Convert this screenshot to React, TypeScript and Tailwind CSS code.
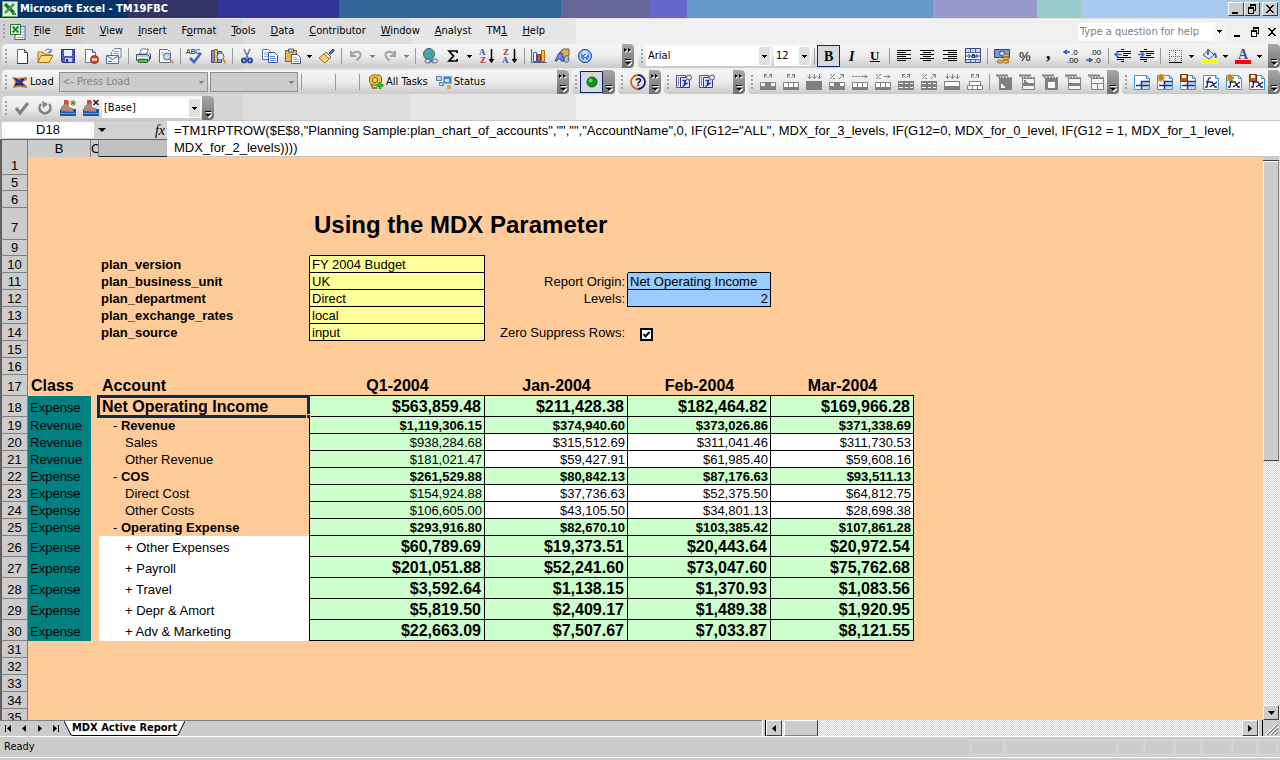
import { ReactNode, useState } from "react";

const ARROW = "M0 0h5v1h-1v1h-1v1h-1v-1h-1v-1h-1z";

// Small 16x16 toolbar drawings, keyed by command name.
const icons: Record<string, ReactNode> = {
  excel: (
    <>
      <rect x="5" y="2.500" width="10" height="13" fill="#fff" stroke="#4a5a9a" />
      <path d="M11 5h3M11 8h3M11 11h3M7 13.500h7" stroke="#7a9ad0" />
      <rect x="0.5" y="0.5" width="10" height="10" fill="#e4f4e0" stroke="#2c7a34" />
      <path d="M2.500 2.500l6 6M8.500 2.500l-6 6" stroke="#1e8a2c" strokeWidth="2" />
    </>
  ),
  app: (
    <>
      <rect x="0.5" y="0.5" width="15" height="15" fill="#e4f4e0" stroke="#6fae70" />
      <path d="M3 3l9 9" stroke="#187a28" strokeWidth="3.500" />
      <path d="M12 3l-9 9" stroke="#3ca048" strokeWidth="2.500" />
      <path d="M10 12h4v2h-4z" fill="#2e9a3c" />
    </>
  ),
  new: (
    <>
      <path d="M3.500 1.500h7l3 3v11h-10z" fill="#fff" stroke="#5a6a9a" />
      <path d="M10.500 1.500v3h3" fill="#c8d4f0" stroke="#3a4a7a" />
      <path d="M13.500 5v10.500h-10" fill="none" stroke="#202c5c" />
    </>
  ),
  open: (
    <>
      <path d="M1 14V4h5l1 2h6v3" fill="#f4d070" stroke="#a87818" />
      <path d="M1 14.500l3-7h12l-4 7z" fill="#ffdc78" stroke="#a06c10" />
      <path d="M8 3c2-3 5-2 6 0M14 1v3h-3" fill="none" stroke="#405a98" />
    </>
  ),
  save: (
    <>
      <path d="M1.500 1.500h13v13h-12l-1-1z" fill="#4a5cc8" stroke="#28307c" />
      <rect x="4" y="2" width="8" height="6" fill="#e8ecff" />
      <rect x="5" y="10" width="7" height="4" fill="#c8cce0" />
      <rect x="6" y="11" width="2" height="3" fill="#28307c" />
    </>
  ),
  permission: (
    <>
      <path d="M2.500 1.500h7l3 3v10h-10z" fill="#fff" stroke="#6878a8" />
      <path d="M9.500 1.500v3h3" fill="#c8d4f0" stroke="#4a5a8a" />
      <circle cx="11.500" cy="11.500" r="4" fill="#e04428" stroke="#a02810" />
      <path d="M9 11.500h5" stroke="#fff" strokeWidth="2" />
    </>
  ),
  mail: (
    <>
      <path d="M5.500 7V4.500l3-4h6.500v9h-3" fill="#fff" stroke="#7080b0" />
      <path d="M8 3.500h5M7 5.500h6" stroke="#90a4d0" />
      <path d="M0.500 7.500h12v8h-12z" fill="#f0f4ff" stroke="#5868a0" />
      <path d="M0.500 7.500l6 4 6-4M2 13.500h4" fill="none" stroke="#5868a0" />
    </>
  ),
  print: (
    <>
      <path d="M4.500 6l2-5h7l-2 5z" fill="#fff" stroke="#6070a0" />
      <path d="M1.500 6.500h11l2 2v4h-13z" fill="#c4cbd8" stroke="#404c68" />
      <path d="M2 9.500h11" stroke="#fff" />
      <path d="M3.500 11.500h9v3h-9z" fill="#58c048" stroke="#287020" />
      <path d="M14.500 5l1 2v4" fill="none" stroke="#404c68" />
    </>
  ),
  preview: (
    <>
      <path d="M1.500 1.500h8l3 3v10h-11z" fill="#fff" stroke="#5a6a9a" />
      <path d="M3 4.500h4M3 6.500h3" stroke="#b0bcd8" />
      <circle cx="9" cy="8.500" r="3.500" fill="#c0e0f8" stroke="#506080" />
      <path d="M11.500 11l4 4" stroke="#d09030" strokeWidth="2" />
    </>
  ),
  spell: (
    <>
      <text x="-1" y="6" fontSize="7" fontFamily="Liberation Sans, sans-serif" fill="#000">ABC</text>
      <path d="M3 10l4 4 7-9" fill="none" stroke="#3a66c8" strokeWidth="2.500" />
    </>
  ),
  research: (
    <>
      <path d="M1.500 2.500h3v12h-3z" fill="#7890d0" stroke="#3a4a8a" />
      <path d="M4.500 1.500h3v13h-3z" fill="#e0c878" stroke="#80642a" />
      <path d="M7.500 3.500h4v11h-4z" fill="#90a8e0" stroke="#3a4a8a" />
      <circle cx="10.500" cy="8.500" r="3.500" fill="#d4ecfc" stroke="#506080" />
      <path d="M13 11l2.500 4" stroke="#d09030" strokeWidth="2" />
    </>
  ),
  cut: (
    <>
      <path d="M5 1l4 9M11 1l-4 9" stroke="#6878a0" strokeWidth="1.500" />
      <circle cx="5" cy="12.500" r="2" fill="none" stroke="#2848a8" strokeWidth="2" />
      <circle cx="11" cy="12.500" r="2" fill="none" stroke="#2848a8" strokeWidth="2" />
    </>
  ),
  copy: (
    <>
      <path d="M0.500 1.500h6l2 2v8h-8z" fill="#fff" stroke="#5070b0" />
      <path d="M2 4.500h4M2 6.500h4M2 8.500h4" stroke="#90b0e0" />
      <path d="M6.500 4.500h6l3 3v7h-9z" fill="#fff" stroke="#3050a0" />
      <path d="M8 8.500h5M8 10.500h6M8 12.500h6" stroke="#5888d8" />
    </>
  ),
  paste: (
    <>
      <path d="M0.500 2.500h11v11h-11z" fill="#e8b850" stroke="#886018" />
      <path d="M3.500 1h5v3h-5z" fill="#c8ccd8" stroke="#585c70" />
      <path d="M6.500 6.500h6l3 3v6h-9z" fill="#fff" stroke="#4858a0" />
      <path d="M8 9.500h4M8 11.500h6M8 13.500h6" stroke="#90a8d8" />
    </>
  ),
  painter: (
    <>
      <path d="M10 5l4-4 1.500 1.500-4 4z" fill="#6878c8" stroke="#303c80" />
      <path d="M7 4l5 5-2 2-5-5z" fill="#d8dce8" stroke="#606880" />
      <path d="M5 6l5 5-4 4-6-5z" fill="#f8d868" stroke="#a07820" />
    </>
  ),
  undo: <path d="M3 3v5h5M3.500 7.500c2-5 10-5 9 0-.5 2-2 3-4 5" fill="none" stroke="#a0a0a0" strokeWidth="2" />,
  redo: <path d="M13 3v5h-5M12.500 7.500c-2-5-10-5-9 0 .5 2 2 3 4 5" fill="none" stroke="#a0a0a0" strokeWidth="2" />,
  link: (
    <>
      <circle cx="7" cy="6" r="5.500" fill="#4898d8" stroke="#286098" />
      <path d="M3 3c3-2 4 1 3 3s-3 1-3 3M9 2c3 2 2 3 1 5" fill="none" stroke="#58b050" strokeWidth="2" />
      <ellipse cx="6" cy="13" rx="3" ry="2" fill="#e8ecf4" stroke="#505c78" />
      <ellipse cx="12.500" cy="13" rx="3" ry="2" fill="#e8ecf4" stroke="#505c78" />
      <path d="M7 13h5" stroke="#505c78" />
    </>
  ),
  sum: <path d="M12 5V3h-8l4.500 5-4.500 5h8V11" fill="none" stroke="#000" strokeWidth="1.700" />,
  sortAsc: (
    <>
      <text x="0" y="7" fontSize="9" fontWeight="bold" fontFamily="Liberation Serif, serif" fill="#3050b0">A</text>
      <text x="1" y="15" fontSize="9" fontWeight="bold" fontFamily="Liberation Serif, serif" fill="#b03030">Z</text>
      <path d="M12.500 1v13M10.500 11l2 3 2-3" fill="none" stroke="#000" strokeWidth="1.500" />
    </>
  ),
  sortDesc: (
    <>
      <text x="1" y="7" fontSize="9" fontWeight="bold" fontFamily="Liberation Serif, serif" fill="#b03030">Z</text>
      <text x="0" y="15" fontSize="9" fontWeight="bold" fontFamily="Liberation Serif, serif" fill="#3050b0">A</text>
      <path d="M12.500 1v13M10.500 11l2 3 2-3" fill="none" stroke="#000" strokeWidth="1.500" />
    </>
  ),
  chart: (
    <>
      <path d="M0.500 1v13.500h15" fill="none" stroke="#4060a0" />
      <path d="M2.500 4.500h3v9h-3z" fill="#f0f4ff" stroke="#3858b0" />
      <path d="M6.500 6.500h3v7h-3z" fill="#e05830" stroke="#903010" />
      <path d="M10.500 2.500h3v11h-3z" fill="#f0c840" stroke="#c06010" />
    </>
  ),
  drawing: (
    <>
      <path d="M6 4l3-3h6v6l-3 3h-6z" fill="#d8b458" stroke="#806020" />
      <path d="M1 13l4-8h3l2 8h-3v-2h-3l-1 2z" fill="#7a88e0" stroke="#34408c" />
      <ellipse cx="12.500" cy="11" rx="2.500" ry="3.500" fill="#b8bcc8" stroke="#606478" />
    </>
  ),
  help: (
    <>
      <circle cx="8" cy="8" r="6.500" fill="#4a8ae8" stroke="#1c4ca8" />
      <circle cx="8" cy="8" r="5" fill="none" stroke="#fff" />
      <path d="M6 6.500c0-3 4.500-2.500 4 0-.5 1-2 1.200-2 2.500M8 10.500v1.500" fill="none" stroke="#fff" strokeWidth="1.500" />
    </>
  ),
  bold: <text x="3" y="13" fontSize="14" fontWeight="bold" fontFamily="Liberation Serif, serif">B</text>,
  italic: <text x="5" y="13" fontSize="14" fontWeight="bold" fontStyle="italic" fontFamily="Liberation Serif, serif">I</text>,
  underline: (
    <>
      <text x="3" y="12" fontSize="13" fontWeight="bold" fontFamily="Liberation Serif, serif">U</text>
      <path d="M3 13.500h10" stroke="#000" />
    </>
  ),
  left: <path d="M1 2.500h14M1 4.500h9M1 6.500h14M1 8.500h9M1 10.500h14M1 12.500h9" stroke="#000" />,
  center: <path d="M1 2.500h14M4 4.500h8M1 6.500h14M4 8.500h8M1 10.500h14M4 12.500h8" stroke="#000" />,
  right: <path d="M1 2.500h14M6 4.500h9M1 6.500h14M6 8.500h9M1 10.500h14M6 12.500h9" stroke="#000" />,
  merge: (
    <>
      <path d="M0.500 0.500h15v14h-15z" fill="#fff" stroke="#384880" />
      <path d="M1 1h14v3h-14zM1 11h14v3h-14z" fill="#c8d8f4" />
      <path d="M0.500 4.500h15M0.500 11.500h15M5.500 0.500v4M10.500 0.500v4M5.500 11.500v3M10.500 11.500v3" stroke="#4860a8" />
      <path d="M1 8h4M11 8h4M3.500 6l2 2-2 2M12.500 6l-2 2 2 2" fill="none" stroke="#203070" />
      <text x="6" y="10" fontSize="8" fontWeight="bold" fontFamily="Liberation Sans, sans-serif">a</text>
    </>
  ),
  currency: (
    <>
      <path d="M0.500 1.500h15v8h-15z" fill="#7898e0" stroke="#2c4490" />
      <circle cx="8" cy="5.500" r="2.500" fill="#c8d8f8" stroke="#2c4490" />
      <ellipse cx="6" cy="13.500" rx="3" ry="1.500" fill="#f0c850" stroke="#906818" />
      <ellipse cx="12" cy="7.500" rx="3" ry="1.500" fill="#f0c850" stroke="#906818" />
      <ellipse cx="12" cy="10.500" rx="3" ry="1.500" fill="#f0c850" stroke="#906818" />
      <ellipse cx="12" cy="13.500" rx="3" ry="1.500" fill="#f0c850" stroke="#906818" />
    </>
  ),
  percent: <text x="2" y="13" fontSize="13" fontFamily="Liberation Sans, sans-serif">%</text>,
  comma: <text x="6" y="11" fontSize="18" fontWeight="bold" fontFamily="Liberation Serif, serif">,</text>,
  moreDecimals: (
    <>
      <path d="M1 4h6M4 2l-3 2 3 2" fill="none" stroke="#2858c0" strokeWidth="1.500" />
      <text x="8" y="7" fontSize="8" fontFamily="Liberation Sans, sans-serif">.0</text>
      <text x="4" y="15" fontSize="8" fontFamily="Liberation Sans, sans-serif">.00</text>
    </>
  ),
  lessDecimals: (
    <>
      <text x="4" y="7" fontSize="8" fontFamily="Liberation Sans, sans-serif">.00</text>
      <path d="M0 12h6M3 10l3 2-3 2" fill="none" stroke="#2858c0" strokeWidth="1.500" />
      <text x="8" y="15" fontSize="8" fontFamily="Liberation Sans, sans-serif">.0</text>
    </>
  ),
  outdent: (
    <>
      <path d="M6 1.500h3M2 3.500h14M8 5.500h8M8 7.500h5M2 9.500h14M2 11.500h7M6 13.500h3" stroke="#000" />
      <path d="M0 6.500h7M3 4l-3 2.500 3 2.500" fill="none" stroke="#3868c8" strokeWidth="1.500" />
    </>
  ),
  indent: (
    <>
      <path d="M6 1.500h3M2 3.500h14M8 5.500h8M8 7.500h5M2 9.500h14M2 11.500h7M6 13.500h3" stroke="#000" />
      <path d="M0 6.500h6M3 4l3 2.500-3 2.500" fill="none" stroke="#3868c8" strokeWidth="1.500" />
    </>
  ),
  borders: (
    <>
      <path d="M2 2.500h13M2 8.500h13M2.500 2v12M8.500 2v12M14.500 2v12" stroke="#606060" strokeDasharray="1 1" />
      <path d="M2 14.500h13" stroke="#000" />
    </>
  ),
  fill: (
    <>
      <path d="M2 7l6-5 5 5-5 4z" fill="#e8f0fc" stroke="#405890" />
      <path d="M7 1v6M13 5c2 1 2 3 2 5" fill="none" stroke="#3060b8" strokeWidth="1.800" />
      <path d="M0 12h16v4h-16z" fill="#ff0" />
    </>
  ),
  fontColor: (
    <>
      <text x="3" y="11" fontSize="14" fontWeight="bold" fontFamily="Liberation Serif, serif" fill="#3c5088">A</text>
      <path d="M0 12h16v4h-16z" fill="#f00" />
    </>
  ),
  load: (
    <>
      <path d="M0 3l6 1 9-1v3l-5 2 5 4v2l-8-1-6 1 2-6z" fill="#c87838" />
      <path d="M2 4l5 2 6-2-3 5 3 3-6-1-5 1 3-4z" fill="#10207c" />
      <path d="M5 6h5v4h-5z" fill="#28409c" />
    </>
  ),
  tasks: (
    <>
      <path d="M1.500 3l3-2h7l2 2v5l-3 3h-6l-3-3z" fill="#f0c030" stroke="#886410" />
      <circle cx="7" cy="6" r="2.500" fill="#fae890" stroke="#705010" />
      <path d="M3 10l2 4h4" fill="none" stroke="#a87c18" strokeWidth="2" />
      <path d="M12 8v7M8.500 11.500h7" stroke="#38a838" strokeWidth="3" />
    </>
  ),
  status: (
    <>
      <path d="M0.500 2.500h5v4h-5zM3.500 8.500h4v3h-4z" fill="#b8d4f8" stroke="#5880c0" />
      <path d="M7.500 2.500h8v7h-8z" fill="#4880d0" stroke="#8ab0e8" />
      <path d="M9 5h4v3h-4z" fill="#d8e8ff" />
      <path d="M11 11h4v4h-4z" fill="#e8a070" />
    </>
  ),
  green: (
    <>
      <circle cx="8" cy="8" r="5" fill="#189028" stroke="#0c6018" />
      <circle cx="6.500" cy="6.500" r="2" fill="#50e058" />
    </>
  ),
  question: (
    <>
      <path d="M8 1a7 7 0 0 0 0 14" fill="none" stroke="#d06818" strokeWidth="1.800" />
      <path d="M8 1a7 7 0 0 1 0 14" fill="none" stroke="#181880" strokeWidth="1.800" />
      <text x="5" y="12" fontSize="11" fontWeight="bold" fontFamily="Liberation Sans, sans-serif">?</text>
    </>
  ),
  snapshot: (
    <>
      <path d="M0.500 1.500h9v12h-9z" fill="#f0f0fc" stroke="#50508c" />
      <path d="M2.500 3v9" stroke="#8080b8" />
      <path d="M4.500 3.500h9v10h-9z" fill="#e0e4fc" stroke="#383880" />
      <path d="M6.500 6.500h3l-1 3h2l-4 3" fill="none" stroke="#2030a0" strokeWidth="1.500" />
      <circle cx="13" cy="3.500" r="2.500" fill="#e8e8f0" stroke="#50508c" />
    </>
  ),
  check: <path d="M2 8l4 5 8-10" fill="none" stroke="#808080" strokeWidth="3" />,
  refresh: (
    <>
      <path d="M4 4a5.500 5.500 0 1 0 8 0" fill="none" stroke="#808080" strokeWidth="2.500" />
      <path d="M5 1l6 3-5 4z" fill="#808080" />
    </>
  ),
  cubeNew: (
    <>
      <path d="M0 9h16v7h-16z" fill="#1c58a8" />
      <path d="M1 11V7l3-3 1-3h4v6l4 1v4z" fill="#b08878" />
      <path d="M4 0h4v4h-4z" fill="#d04848" />
      <path d="M13 0v6M10 3h6M11 1l4 4M15 1l-4 4" stroke="#807010" />
      <path d="M0 13h16v1h-16z" fill="#58a0e0" />
    </>
  ),
  cubeDrop: (
    <>
      <path d="M0 9h16v7h-16z" fill="#1c58a8" />
      <path d="M1 11V7l3-3 1-3h4v6l4 1v4z" fill="#b08878" />
      <path d="M4 0h4v4h-4z" fill="#d04848" />
      <path d="M10.500 0l5 5M15.500 0l-5 5" stroke="#202030" strokeWidth="1.500" />
      <path d="M0 13h16v1h-16z" fill="#58a0e0" />
    </>
  ),
  formula: (
    <>
      <path d="M0.500 1.500h12l3 3v11h-15z" fill="#fff" stroke="#3898d0" />
      <path d="M12.500 1.500v3h3" fill="none" stroke="#3898d0" />
      <path d="M8 4c-3-1-3 2-4 9h-2M3 8h4M7 8h2l3 5h2M14 8l-7 5" fill="none" stroke="#182070" strokeWidth="1.300" />
    </>
  ),
  sheet: (
    <>
      <path d="M0.500 1.500h12l3 3v11h-15z" fill="#fff" stroke="#3898d0" />
      <path d="M12.500 1.500v3h3" fill="none" stroke="#3898d0" />
      <path d="M7 8h8v7h-8z" fill="#c0dcf4" />
      <path d="M7 7.500h9M2 11.500h13M7.500 7v8" stroke="#183880" strokeWidth="1.500" />
    </>
  ),
};

const star = <path d="M4 0v8M0 4h8M1 1l6 6M7 1l-6 6" stroke="#c88810" strokeWidth="1.500" />;
const disk = (
  <>
    <path d="M0.500 0.500h7v7h-7z" fill="#c05818" stroke="#803008" />
    <path d="M2 1h4v3h-4z" fill="#fff" />
  </>
);
icons.sheetNew = <>{icons.sheet}{star}</>;
icons.sheetSave = <>{icons.sheet}{disk}</>;
icons.formulaNew = <>{icons.formula}{star}</>;
icons.formulaSave = <>{icons.formula}{disk}</>;

// Greyed-out allocation commands: an arrow hint over a strip of cells.
const hints: Record<string, string> = {
  split: "M4.500 4V0.500M4 0.500h3M4.500 0.500l3 3M11.500 4V0.500M12 0.500h-3M11.500 0.500l-3 3",
  down: "M3.500 0v5M1.500 2.500l2 2 2-2M8.500 0v5M6.500 2.500l2 2 2-2M13.500 0v5M11.500 2.500l2 2 2-2",
  pct: "M1 5l5-5M1 1h2M4 4.500h2M10 5l4-4M11 0.500h3.500v3",
  dots: "M0 2.500h2M3 2.500h2M6 2.500h2M9 2.500h6M13 0.500l2 2-2 2",
  pctRight: "M1 5l5-5M1 1h2M4 4.500h2M9 2.500h6M13 0.500l2 2-2 2",
};
const bodies: Record<string, ReactNode> = {
  left: <><path d="M0.500 8.500h15v7h-15z" fill="#fff" /><path d="M0 12h16v4h-16zM5 8h6v6h-6z" fill="#808080" stroke="none" /><path d="M10.500 8v4" /></>,
  cells: <><path d="M0.500 8.500h15v7h-15zM5.500 8v6M10.500 8v6" fill="#fff" /><path d="M0 13h16v3h-16z" fill="#808080" stroke="none" /></>,
  solid: <path d="M0 7h16v9h-16z" fill="#808080" stroke="none" />,
  grid: <><path d="M0 7h16v9h-16z" fill="#808080" stroke="none" /><path d="M1 9.500h4M7 9.500h3M12 9.500h3M1 13.500h4M7 13.500h3M12 13.500h3" stroke="#fff" /></>,
  half: <><path d="M0.500 7.500h15v8h-15z" fill="#fff" /><path d="M0 12h16v4h-16z" fill="#808080" stroke="none" /></>,
  wide: <path d="M0.500 11.500h15v4h-15zM2.500 11.500v-4h11v4M5.500 11.500v4M10.500 11.500v4" fill="#fff" />,
};
const allocations = [
  ["split", "left"], ["split", "cells"], ["down", "solid"], ["pct", "left"], ["dots", "cells"],
  ["pctRight", "cells"], ["split", "grid"], ["pct", "grid"], ["down", "half"], ["split", "wide"],
];
allocations.forEach(([hint, body], i) => {
  icons[`allocate${i}`] = (
    <g stroke="#808080" fill="none">
      <path d={hints[hint]} />
      {bodies[body]}
    </g>
  );
});

const pivots: ReactNode[] = [
  <><path d="M3 4h13v12h-13z" fill="#808080" stroke="none" /><path d="M5 10h2v2h2v2h-4z" fill="#fff" stroke="none" /></>,
  <><path d="M3.500 4.500h12v11h-12z" fill="#f4f4f4" /><path d="M3 9h13v3h-13z" fill="#808080" stroke="none" /><path d="M5 6h2v2h2v1h-4z" fill="#808080" stroke="none" /></>,
  <><path d="M3 4h13v12h-13z" fill="#808080" stroke="none" /><path d="M6 8h7v6h-7z" fill="#fff" stroke="none" /></>,
  <><path d="M3.500 4.500h12v11h-12z" fill="#f4f4f4" /><path d="M3 9h13v3h-13z" fill="#808080" stroke="none" /></>,
  <path d="M3.500 4.500h12v11h-12zM3.500 9.500h12M9.500 9.500v6" fill="#f4f4f4" />,
];
pivots.forEach((body, i) => {
  icons[`pivot${i}`] = (
    <g stroke="#808080" fill="none">
      <path d="M0 1.500h12" strokeWidth="2" />
      <path d="M2 3.500h14" strokeDasharray="2 1" />
      {body}
    </g>
  );
});

function Icon({ name }: { name: string }) {
  return (
    <svg viewBox="0 0 16 16" className="w-4 h-4 shrink-0 overflow-visible" aria-hidden="true">
      {icons[name]}
    </svg>
  );
}

function Tool({ name, active = false }: { name: string; active?: boolean }) {
  return (
    <button
      aria-label={name}
      className={`w-[23px] h-[22px] shrink-0 flex items-center justify-center ${
        active ? "border border-[#0a246a] bg-[#d6d9de]" : ""
      }`}
    >
      <Icon name={name} />
    </button>
  );
}

function Tools({ names }: { names: string[] }) {
  return names.map((n) => <Tool key={n} name={n} />);
}

function Down({ color = "#000", label = "More" }: { color?: string; label?: string }) {
  return (
    <button aria-label={label} className="w-[11px] h-5 shrink-0 flex items-center justify-center">
      <svg viewBox="0 0 5 3" className="w-[5px] h-[3px]">
        <path d={ARROW} fill={color} />
      </svg>
    </button>
  );
}

function Sep() {
  return (
    <div className="w-[6px] shrink-0 flex justify-center">
      <div className="w-px h-4 bg-[#9a9a9a]" />
    </div>
  );
}

function Grip() {
  return (
    <div className="w-[8px] shrink-0 flex justify-center">
      <div className="w-[2px] h-[15px] bg-[repeating-linear-gradient(#a0a0a0_0_2px,transparent_2px_4px)]" />
    </div>
  );
}

function Cap({ more = false }: { more?: boolean }) {
  return (
    <button
      aria-label="Toolbar options"
      className="w-3 h-full ml-auto shrink-0 rounded-r-sm bg-linear-to-b from-[#a8a8a8] to-[#707070] flex items-end justify-center pb-px"
    >
      <svg viewBox="0 0 8 20" className="w-2 h-5">
        {more && (
          <>
            <path d="M1 2l3 2-3 2zM5 2l3 2-3 2z" fill="#fff" />
            <path d="M0 1l3 2-3 2zM4 1l3 2-3 2z" fill="#000" />
          </>
        )}
        <path d="M2 13.500h6M2 16h6l-3 3z" fill="#fff" stroke="#fff" />
        <path d="M1 12.500h6" stroke="#000" />
        <path d="M1 15h6l-3 3z" fill="#000" />
      </svg>
    </button>
  );
}

function Bar({ width = "", children }: { width?: string; children: ReactNode }) {
  return (
    <div
      className={`h-6 flex items-center shrink-0 rounded-sm overflow-hidden bg-linear-to-b from-[#f6f6f6] via-[#ececec] to-[#cacaca] ${width}`}
    >
      {children}
    </div>
  );
}

function Combo({ label, value, width, disabled = false }: { label: string; value: string; width: string; disabled?: boolean }) {
  return (
    <div className={`relative h-5 shrink-0 ${width}`}>
      <select
        aria-label={label}
        disabled={disabled}
        defaultValue={value}
        className={`w-full h-full appearance-none pl-[2px] ${
          disabled ? "border border-[#909090] bg-[#cccccc] text-[#84847c]" : "bg-white"
        }`}
      >
        <option>{value}</option>
      </select>
      <span
        className={`absolute right-px top-px bottom-px w-[11px] pointer-events-none flex items-center justify-center ${
          disabled ? "" : "bg-[#e0e0e0]"
        }`}
      >
        <svg viewBox="0 0 5 3" className="w-[5px] h-[3px]">
          <path d={ARROW} fill={disabled ? "#808080" : "#000"} />
        </svg>
      </span>
    </div>
  );
}

const windowGlyphs = [
  "M2 9h6v2h-6z",
  "M4 1h6v2h-6zM9 3h1v4h-1zM4 3h1v1h-1zM2 4h6v2h-6zM2 6h1v4h-1zM7 6h1v4h-1zM2 10h6v1h-6zM8 7h2v1h-2z",
  "M2 2h2v1h1v1h2v-1h1v-1h2v1h-1v1h-1v1h-1v2h1v1h1v1h1v1h-2v-1h-1v-1h-2v1h-1v1h-2v-1h1v-1h1v-1h1v-2h-1v-1h-1v-1h-1z",
];
const windowLabels = ["Minimize", "Restore", "Close"];

function Glyph({ d }: { d: string }) {
  return (
    <svg viewBox="0 0 12 12" className="w-3 h-3 shrink-0">
      <path d={d} />
    </svg>
  );
}

const menus = [
  ["F", "ile"], ["E", "dit"], ["V", "iew"], ["I", "nsert"], ["F", "o", "rmat"], ["T", "ools"], ["D", "ata"],
  ["C", "ontributor"], ["W", "indow"], ["A", "nalyst"], ["TM", "1", ""], ["H", "elp"],
];

function MenuLabel({ parts }: { parts: string[] }) {
  const [before, key, after] = parts.length === 3 ? parts : ["", ...parts];
  return <>{before}<u>{key}</u>{after}</>;
}

function TitleBar() {
  return (
    <header className="h-[18px] shrink-0 flex items-center px-[2px] text-white bg-[linear-gradient(90deg,#003366_0_10%,#333366_10%_17%,#333399_17%_26.5%,#336699_26.5%_43.8%,#666699_43.8%_50.8%,#6666cc_50.8%_53.7%,#6699cc_53.7%_72.9%,#9999cc_72.9%_81%,#99cccc_81%_84.5%,#a6caf0_84.5%)]">
      <Icon name="app" />
      <h1 className="ml-[2px] font-bold">Microsoft Excel - TM19FBC</h1>
      <div className="ml-auto flex">
        {windowGlyphs.map((d, i) => (
          <button
            key={i}
            aria-label={windowLabels[i]}
            className={`w-4 h-[14px] bg-[#cccccc] border border-t-white border-l-white border-r-[#404040] border-b-[#404040] flex items-center justify-center ${
              i === 2 ? "ml-[2px]" : ""
            }`}
          >
            <Glyph d={d} />
          </button>
        ))}
      </div>
    </header>
  );
}

function MenuBar() {
  return (
    <nav className="h-[26px] shrink-0 flex items-center border-t border-[#e4e4e4]">
      <Grip />
      <span className="ml-[2px]">
        <Icon name="excel" />
      </span>
      <div className="flex">
        {menus.map((m) => (
          <button key={m.join("")} className="pl-2 pr-[7px]">
            <MenuLabel parts={m} />
          </button>
        ))}
      </div>
      <div className="ml-auto flex items-center">
        <input
          aria-label="Help search"
          placeholder="Type a question for help"
          className="w-[136px] h-[18px] bg-white pl-[2px] placeholder:text-[#808080]"
        />
        <div className="bg-[#f6f6f6] mr-1">
          <Down label="Help topics" />
        </div>
        {windowGlyphs.map((d, i) => (
          <button key={i} aria-label={`${windowLabels[i]} workbook`} className="w-[17px] h-4 flex items-center justify-center">
            <Glyph d={d} />
          </button>
        ))}
      </div>
    </nav>
  );
}

function Toolbars() {
  return (
    <div className="shrink-0 flex flex-col gap-[2px]">
      <div className="flex gap-1 pl-[2px]">
        <Bar width="w-[632px]">
          <Grip />
          <Tools names={["new", "open", "save", "permission", "mail"]} />
          <Sep />
          <Tools names={["print", "preview"]} />
          <Sep />
          <Tools names={["spell", "research"]} />
          <Sep />
          <Tools names={["cut", "copy", "paste"]} />
          <Down />
          <Tool name="painter" />
          <Sep />
          <Tool name="undo" />
          <Down color="#808080" />
          <Tool name="redo" />
          <Down color="#808080" />
          <Sep />
          <Tools names={["link", "sum"]} />
          <Down />
          <Tools names={["sortAsc", "sortDesc"]} />
          <Sep />
          <Tools names={["chart", "drawing", "help"]} />
          <Cap more />
        </Bar>
        <Bar width="flex-1">
          <Grip />
          <Combo label="Font" value="Arial" width="w-[125px]" />
          <div className="w-[3px]" />
          <Combo label="Font size" value="12" width="w-[37px]" />
          <Sep />
          <Tool name="bold" active />
          <Tools names={["italic", "underline"]} />
          <Sep />
          <Tools names={["left", "center", "right", "merge"]} />
          <Sep />
          <Tools names={["currency", "percent", "comma", "moreDecimals", "lessDecimals"]} />
          <Sep />
          <Tools names={["outdent", "indent"]} />
          <Sep />
          <Tool name="borders" />
          <Down />
          <Tool name="fill" />
          <Down />
          <Tool name="fontColor" />
          <Down />
          <Cap />
        </Bar>
      </div>
      <div className="flex gap-[3px] pl-[2px]">
        <Bar width="w-[567px]">
          <Grip />
          <button className="w-[49px] flex items-center gap-[2px] pl-[2px]">
            <Icon name="load" />
            Load
          </button>
          <Combo label="Load item" value="<- Press Load" width="w-[149px]" disabled />
          <div className="w-[2px]" />
          <Combo label="Load value" value="" width="w-[88px]" disabled />
          <Sep />
          <div className="w-7" />
          <Sep />
          <div className="w-[18px]" />
          <Sep />
          <button className="ml-[6px] flex items-center gap-[2px]">
            <Icon name="tasks" />
            All Tasks
          </button>
          <button className="ml-2 flex items-center gap-[2px]">
            <Icon name="status" />
            Status
          </button>
          <Cap more />
        </Bar>
        <Bar width="w-[43px]">
          <Grip />
          <Tool name="green" active />
          <Cap />
        </Bar>
        <Bar width="w-[43px]">
          <Grip />
          <Tool name="question" />
          <Cap more />
        </Bar>
        <Bar width="w-[81px]">
          <Grip />
          <Tool name="snapshot" />
          <Tool name="snapshot" />
          <Cap more />
        </Bar>
        <Bar width="w-[371px]">
          <Grip />
          <Tools names={allocations.map((_, i) => `allocate${i}`)} />
          <Sep />
          <Tools names={pivots.map((_, i) => `pivot${i}`)} />
          <Cap />
        </Bar>
        <Bar width="flex-1">
          <Grip />
          <Tools names={["sheet", "sheetNew", "sheetSave", "formula", "formulaNew", "formulaSave"]} />
          <Cap />
        </Bar>
      </div>
      <div className="flex pl-[2px]">
        <Bar width="w-[212px]">
          <Grip />
          <Tools names={["check", "refresh", "cubeNew", "cubeDrop"]} />
          <Combo label="Sandbox" value="[Base]" width="w-[99px]" />
          <Cap />
        </Bar>
      </div>
    </div>
  );
}

const formula =
  '=TM1RPTROW($E$8,"Planning Sample:plan_chart_of_accounts","","","AccountName",0, IF(G12="ALL", MDX_for_3_levels, IF(G12=0, MDX_for_0_level, IF(G12 = 1, MDX_for_1_level, MDX_for_2_levels))))';

function FormulaBar() {
  return (
    <div className="h-[37px] shrink-0 flex border-t border-[#c8c8c8] font-['Liberation_Sans',Arial,sans-serif] text-[13px]">
      <div className="w-[167px] shrink-0 flex flex-col bg-[#d2d2d2]">
        <div className="h-[18px] flex items-center pl-[2px]">
          <input aria-label="Name box" defaultValue="D18" className="w-[92px] h-4 bg-white text-center text-[13px]" />
          <button aria-label="Cell names" className="w-4 h-4 flex items-center justify-center">
            <svg viewBox="0 0 8 4" className="w-2 h-1">
              <path d="M0 0h8l-4 4z" />
            </svg>
          </button>
          <button aria-label="Insert function" className="ml-auto pr-[2px] font-['Liberation_Serif',serif] italic text-[14px]">
            fx
          </button>
        </div>
        <div className="flex-1 flex text-center leading-[17px] border-t border-[#606060] border-l-2 bg-[#cccccc]">
          <div className="w-[26px] border-r border-[#808080]" />
          <div className="w-[63px] border-r border-[#808080]">B</div>
          <div className="w-2 overflow-hidden border-r border-[#808080]">C</div>
          <div className="flex-1 bg-[#c0c0c0] border-b border-[#102840]" />
        </div>
      </div>
      <textarea
        aria-label="Formula"
        rows={2}
        defaultValue={formula}
        className="flex-1 resize-none overflow-hidden bg-white pt-px pl-[7px] leading-[17px] border-b border-[#d0c8c0]"
      />
    </div>
  );
}

const filters = [
  ["10", "plan_version", "FY 2004 Budget"],
  ["11", "plan_business_unit", "UK"],
  ["12", "plan_department", "Direct"],
  ["13", "plan_exchange_rates", "local"],
  ["14", "plan_source", "input"],
];

type Account = { row: number; cls: string; name: string; level: number; kind: "total" | "group" | "leaf" | "closed"; values: string[] };

const accounts: Account[] = [
  { row: 18, cls: "Expense", name: "Net Operating Income", level: 0, kind: "total", values: ["$563,859.48", "$211,428.38", "$182,464.82", "$169,966.28"] },
  { row: 19, cls: "Revenue", name: "Revenue", level: 1, kind: "group", values: ["$1,119,306.15", "$374,940.60", "$373,026.86", "$371,338.69"] },
  { row: 20, cls: "Revenue", name: "Sales", level: 2, kind: "leaf", values: ["$938,284.68", "$315,512.69", "$311,041.46", "$311,730.53"] },
  { row: 21, cls: "Revenue", name: "Other Revenue", level: 2, kind: "leaf", values: ["$181,021.47", "$59,427.91", "$61,985.40", "$59,608.16"] },
  { row: 22, cls: "Expense", name: "COS", level: 1, kind: "group", values: ["$261,529.88", "$80,842.13", "$87,176.63", "$93,511.13"] },
  { row: 23, cls: "Expense", name: "Direct Cost", level: 2, kind: "leaf", values: ["$154,924.88", "$37,736.63", "$52,375.50", "$64,812.75"] },
  { row: 24, cls: "Expense", name: "Other Costs", level: 2, kind: "leaf", values: ["$106,605.00", "$43,105.50", "$34,801.13", "$28,698.38"] },
  { row: 25, cls: "Expense", name: "Operating Expense", level: 1, kind: "group", values: ["$293,916.80", "$82,670.10", "$103,385.42", "$107,861.28"] },
  { row: 26, cls: "Expense", name: "Other Expenses", level: 2, kind: "closed", values: ["$60,789.69", "$19,373.51", "$20,443.64", "$20,972.54"] },
  { row: 27, cls: "Expense", name: "Payroll", level: 2, kind: "closed", values: ["$201,051.88", "$52,241.60", "$73,047.60", "$75,762.68"] },
  { row: 28, cls: "Expense", name: "Travel", level: 2, kind: "closed", values: ["$3,592.64", "$1,138.15", "$1,370.93", "$1,083.56"] },
  { row: 29, cls: "Expense", name: "Depr & Amort", level: 2, kind: "closed", values: ["$5,819.50", "$2,409.17", "$1,489.38", "$1,920.95"] },
  { row: 30, cls: "Expense", name: "Adv & Marketing", level: 2, kind: "closed", values: ["$22,663.09", "$7,507.67", "$7,033.87", "$8,121.55"] },
];

function RowHead({ n, height = "h-[17px]" }: { n: number | string; height?: string }) {
  return (
    <th
      scope="row"
      className={`${height} p-0 font-normal text-[13px] leading-[15px] text-center align-bottom bg-[#cccccc] border-b border-r border-[#808080] border-l-2 border-l-[#606060]`}
    >
      {n}
    </th>
  );
}

function BlankRow({ n, height }: { n: number; height?: string }) {
  return (
    <tr>
      <RowHead n={n} height={height} />
      <td colSpan={8} />
    </tr>
  );
}

function AccountRow({ account }: { account: Account }) {
  const { row, cls, name, kind, level, values } = account;
  const big = kind === "total" || kind === "closed";
  const prefix = kind === "group" ? "- " : kind === "closed" ? "+ " : "";
  const lift = big ? "pb-[2px]" : "pb-px";
  return (
    <tr>
      <RowHead n={row} height={big ? "h-[21px] pb-px" : "h-[17px]"} />
      <td className={`bg-[#008080] px-[2px] align-bottom ${lift}`}>{cls}</td>
      <td />
      <td
        className={`relative border-r border-black align-bottom ${
          level === 0 ? "pl-[3px] font-bold text-base leading-5" : level === 1 ? "pl-[14px] pb-px" : `pl-[26px] ${lift}`
        } ${kind === "closed" ? "bg-white" : ""}`}
      >
        {prefix}
        {kind === "group" ? <b>{name}</b> : name}
        {kind === "total" && (
          <>
            <span className="absolute -top-px -left-[2px] -right-px -bottom-px border-[3px] border-[#0c2c50]" />
            <span className="absolute -bottom-[2px] -right-[2px] w-[5px] h-[5px] bg-[#0c2c50] border border-[#ffcc99]" />
          </>
        )}
      </td>
      {values.map((v, i) => (
        <td
          key={i}
          className={`border-r border-b border-black pl-[2px] text-right align-bottom ${
            big ? "font-bold text-base leading-[18px] pr-[3px]" : kind === "group" ? "font-bold pr-[2px]" : "pr-[2px]"
          } ${kind === "leaf" && i > 0 ? "bg-white" : "bg-[#ccffcc]"}`}
        >
          {v}
        </td>
      ))}
      <td />
    </tr>
  );
}

function Sheet() {
  const [suppress, setSuppress] = useState(true);

  const side = (n: string) => {
    if (n === "10") return <><td /><td className="border-b border-black" /></>;
    if (n === "11" || n === "12")
      return (
        <>
          <td className="pr-[2px] pb-px text-right align-bottom border-r border-black">{n === "11" ? "Report Origin:" : "Levels:"}</td>
          <td className={`px-[2px] align-bottom bg-[#99ccff] border-r border-b border-black ${n === "12" ? "text-right" : ""}`}>
            {n === "11" ? "Net Operating Income" : "2"}
          </td>
        </>
      );
    if (n === "14")
      return (
        <>
          <td className="pr-[3px] pb-px text-right align-bottom">
            <label htmlFor="suppress">Zero Suppress Rows:</label>
          </td>
          <td className="pl-3 align-bottom">
            <span className="relative block w-[13px] h-[13px]">
              <input
                id="suppress"
                type="checkbox"
                checked={suppress}
                onChange={(e) => setSuppress(e.target.checked)}
                className="block w-full h-full appearance-none bg-white border-2 border-black"
              />
              {suppress && (
                <svg viewBox="0 0 13 13" className="absolute inset-0 pointer-events-none">
                  <path d="M3.500 6l2 2.500 4-4.500" fill="none" stroke="#000" strokeWidth="2" />
                </svg>
              )}
            </span>
          </td>
        </>
      );
    return <><td /><td /></>;
  };

  return (
    <main className="flex-1 min-h-0 flex bg-[#ffcc99]">
      <div className="flex-1 min-w-0 overflow-hidden">
        <table className="w-full table-fixed border-separate border-spacing-0 whitespace-nowrap font-['Liberation_Sans',Arial,sans-serif] text-[13px] leading-[15px]">
          <colgroup>
            <col className="w-[28px]" />
            <col className="w-[63px]" />
            <col className="w-[8px]" />
            <col className="w-[211px]" />
            <col className="w-[175px]" />
            <col className="w-[143px]" />
            <col className="w-[143px]" />
            <col className="w-[143px]" />
            <col />
          </colgroup>
          <tbody>
            <BlankRow n={1} height="h-[18px] pb-px" />
            <BlankRow n={5} height="h-[16px]" />
            <BlankRow n={6} />
            <tr>
              <RowHead n={7} height="h-[32px] pb-1" />
              <td colSpan={3} />
              <td colSpan={2} className="pl-1 text-2xl leading-[31px] font-bold">
                Using the MDX Parameter
              </td>
              <td colSpan={3} />
            </tr>
            <tr>
              <RowHead n={9} height="h-[16px]" />
              <td colSpan={3} />
              <td className="border-b border-black" />
              <td colSpan={4} />
            </tr>
            {filters.map(([n, label, value]) => (
              <tr key={n}>
                <RowHead n={n} />
                <td />
                <td />
                <td className="pl-[2px] pb-px font-bold align-bottom border-r border-black">{label}</td>
                <td className="pl-[2px] align-bottom bg-[#ffff99] border-r border-b border-black">{value}</td>
                {side(n)}
                <td />
                <td />
              </tr>
            ))}
            <BlankRow n={15} />
            <BlankRow n={16} />
            <tr className="font-bold text-base leading-[18px]">
              <RowHead n={17} height="h-[21px] pb-px" />
              <td className="pl-[3px] py-0 align-bottom pb-px">Class</td>
              <td />
              <td className="pl-[3px] align-bottom pb-px">Account</td>
              {["Q1-2004", "Jan-2004", "Feb-2004", "Mar-2004"].map((q) => (
                <td key={q} className="text-center align-bottom border-b border-black">{q}</td>
              ))}
              <td />
            </tr>
            {accounts.map((a) => (
              <AccountRow key={a.row} account={a} />
            ))}
            {[31, 32, 33, 34, 35].map((n) => (
              <BlankRow key={n} n={n} />
            ))}
          </tbody>
        </table>
      </div>
      <div className="w-[17px] shrink-0 flex flex-col pr-px bg-[repeating-conic-gradient(#cccccc_0_25%,#fff_0_50%)] bg-[length:2px_2px]">
        <div className="h-1 bg-[#cccccc] border-b border-[#404040]" />
        <div className="h-[300px] bg-[#cccccc] border border-t-white border-l-white border-r-[#808080] border-b-[#404040]" />
        <button
          aria-label="Scroll down"
          className="mt-auto h-[15px] bg-[#cccccc] border border-t-white border-l-white border-r-[#404040] border-b-[#404040] flex items-center justify-center"
        >
          <svg viewBox="0 0 7 4" className="w-[7px] h-1">
            <path d="M0 0h7l-3.500 4z" />
          </svg>
        </button>
      </div>
    </main>
  );
}

const navGlyphs = ["M1 1h1v7h-1zM7 1v7l-4-3.500z", "M6 1v7l-4-3.500z", "M2 1v7l4-3.500z", "M1 1v7l4-3.500zM6 1h1v7h-1z"];
const navLabels = ["First sheet", "Previous sheet", "Next sheet", "Last sheet"];

function ScrollButton({ label, d }: { label: string; d: string }) {
  return (
    <button
      aria-label={label}
      className="w-4 bg-[#cccccc] border border-t-white border-l-white border-r-[#404040] border-b-[#404040] flex items-center justify-center"
    >
      <svg viewBox="0 0 4 7" className="w-1 h-[7px]">
        <path d={d} />
      </svg>
    </button>
  );
}

function TabRow() {
  return (
    <div className="h-4 shrink-0 flex bg-[#cccccc]">
      <div className="flex-1 flex border-t border-[#808080]">
        {navGlyphs.map((d, i) => (
          <button key={i} aria-label={navLabels[i]} className="w-[15px] ml-px flex items-center justify-center">
            <svg viewBox="0 0 9 9" className="w-[9px] h-[9px]">
              <path d={d} />
            </svg>
          </button>
        ))}
        <svg viewBox="0 0 8 15" className="w-2 h-[15px]">
          <path d="M0 0h8v14h-1z" fill="#fff" />
          <path d="M0 0l7 14h1" fill="none" stroke="#000" />
        </svg>
        <button className="bg-white border-b border-black font-bold leading-[14px]">MDX Active Report</button>
        <svg viewBox="0 0 8 15" className="w-2 h-[15px]">
          <path d="M0 0h8l-7 14h-1z" fill="#fff" />
          <path d="M8 0l-7 14h-1" fill="none" stroke="#000" />
        </svg>
      </div>
      <div className="w-[518px] shrink-0 flex">
        <div className="w-1 border-l border-white border-r border-r-black" />
        <ScrollButton label="Scroll left" d="M4 0v7l-4-3.500z" />
        <div className="flex-1 flex bg-[repeating-conic-gradient(#cccccc_0_25%,#fff_0_50%)] bg-[length:2px_2px]">
          <div className="w-[34px] ml-[2px] bg-[#cccccc] border border-t-white border-l-white border-r-[#404040] border-b-[#808080]" />
        </div>
        <ScrollButton label="Scroll right" d="M0 0v7l4-3.500z" />
        <div className="w-[5px] border-l border-white border-r border-r-black" />
        <svg viewBox="0 0 17 16" className="w-[17px] h-4">
          <path d="M4 15L15 4M8 15l7-7M12 15l3-3" stroke="#808080" strokeWidth="1.500" />
          <path d="M3 15L15 3M7 15l8-8M11 15l4-4" stroke="#fff" />
        </svg>
      </div>
    </div>
  );
}

const panes = ["w-[34px]", "w-[112px]", "w-[25px]", "w-[30px]", "w-[26px]", "w-[29px]", "w-[25px]", "w-[20px]"];

function StatusBar() {
  return (
    <footer className="h-6 shrink-0 flex flex-col border-t border-white bg-[#cccccc]">
      <div className="flex-1 flex items-center pl-1 pr-[2px] border-b border-white">
        <span>Ready</span>
        <div className="ml-auto flex gap-px">
          {panes.map((w, i) => (
            <div key={i} className={`h-[15px] border border-[#dadada] ${w}`} />
          ))}
        </div>
      </div>
      <div className="h-[2px]" />
    </footer>
  );
}

export default function App() {
  return (
    <div className="h-screen flex flex-col overflow-hidden text-black text-[11px] font-['DejaVu_Sans_Condensed',Tahoma,sans-serif] bg-[linear-gradient(90deg,#d0d0d0_0_6.4%,#d6d6d6_6.4%_19%,#dedede_19%_32.1%,#e6e6e6_32.1%_45%,#f0f0f0_45%)]">
      <TitleBar />
      <MenuBar />
      <Toolbars />
      <FormulaBar />
      <Sheet />
      <TabRow />
      <StatusBar />
    </div>
  );
}
